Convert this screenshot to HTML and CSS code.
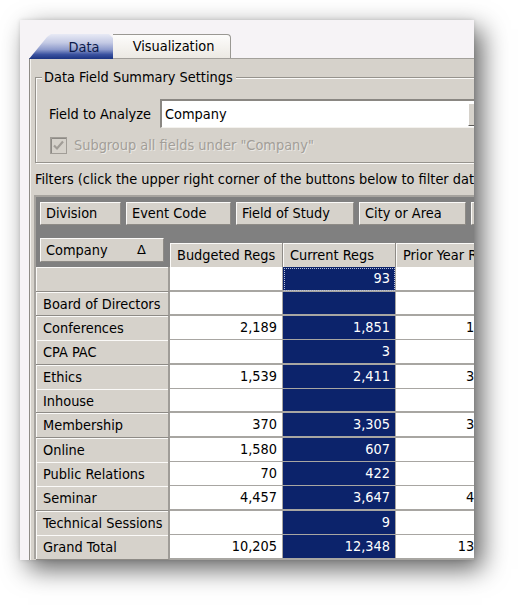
FILE: index.html
```html
<!DOCTYPE html>
<html>
<head>
<meta charset="utf-8">
<link rel="stylesheet" href="styles.css">
</head>
<body>
<div class="page">
  <div class="card">
    <div class="tabs">
      <div class="tab tab-data"><span>Data</span></div>
      <div class="tab tab-vis">Visualization</div>
    </div>
    <div class="panel">
      <fieldset class="group">
        <legend>Data Field Summary Settings</legend>
        <div class="field-row">
          <span class="field-label">Field to Analyze</span>
          <div class="combo">
            <div class="combo-text">Company</div>
            <div class="combo-btn"><span class="arrow"></span></div>
          </div>
        </div>
        <div class="check-row">
          <svg class="checkbox" width="17" height="17" viewBox="0 0 17 17">
            <rect x="0.5" y="0.5" width="16" height="16" fill="#d6d2cb" stroke="#a19d97"/>
            <path d="M1.5 16V1.5H16" fill="none" stroke="#8d8a85"/>
            <path d="M4 8.5 L7 11.5 L13 4.5" fill="none" stroke="#a19d97" stroke-width="2.2"/>
          </svg>
          <span class="disabled">Subgroup all fields under "Company"</span>
        </div>
      </fieldset>
      <div class="filters-label">Filters (click the upper right corner of the buttons below to filter data)</div>
      <div class="grid">
        <div class="filter-row">
          <div class="btn w81">Division</div>
          <div class="btn w105">Event Code</div>
          <div class="btn w118">Field of Study</div>
          <div class="btn w107">City or Area</div>
          <div class="btn w107"></div>
        </div>
        <div class="head-row">
          <div class="btn company"><span>Company</span><span class="sort">Δ</span></div>
          <div class="col-head">Budgeted Regs</div>
          <div class="col-head">Current Regs</div>
          <div class="col-head">Prior Year Regs</div>
        </div>
        <div class="row">
          <div class="rh"></div><div class="c"></div><div class="c sel focus">93</div><div class="c"></div>
        </div>
        <div class="row">
          <div class="rh">Board of Directors</div><div class="c"></div><div class="c sel"></div><div class="c"></div>
        </div>
        <div class="row">
          <div class="rh">Conferences</div><div class="c">2,189</div><div class="c sel">1,851</div><div class="c">1,964</div>
        </div>
        <div class="row">
          <div class="rh">CPA PAC</div><div class="c"></div><div class="c sel">3</div><div class="c"></div>
        </div>
        <div class="row">
          <div class="rh">Ethics</div><div class="c">1,539</div><div class="c sel">2,411</div><div class="c">3,087</div>
        </div>
        <div class="row">
          <div class="rh">Inhouse</div><div class="c"></div><div class="c sel"></div><div class="c"></div>
        </div>
        <div class="row">
          <div class="rh">Membership</div><div class="c">370</div><div class="c sel">3,305</div><div class="c">3,218</div>
        </div>
        <div class="row">
          <div class="rh">Online</div><div class="c">1,580</div><div class="c sel">607</div><div class="c"></div>
        </div>
        <div class="row">
          <div class="rh">Public Relations</div><div class="c">70</div><div class="c sel">422</div><div class="c"></div>
        </div>
        <div class="row">
          <div class="rh">Seminar</div><div class="c">4,457</div><div class="c sel">3,647</div><div class="c">4,102</div>
        </div>
        <div class="row">
          <div class="rh">Technical Sessions</div><div class="c"></div><div class="c sel">9</div><div class="c"></div>
        </div>
        <div class="row">
          <div class="rh">Grand Total</div><div class="c">10,205</div><div class="c sel">12,348</div><div class="c">13,369</div>
        </div>
      </div>
    </div>
  </div>
</div>
</body>
</html>
```

FILE: styles.css
```css
html, body {
  margin: 0;
  padding: 0;
  background: #ffffff;
}
body {
  font-family: "DejaVu Sans Condensed", "DejaVu Sans", sans-serif;
  font-size: 14.4px;
  color: #000;
}
.page {
  padding: 20px 0 0 20px;
  width: 528px;
  height: 616px;
  box-sizing: border-box;
}
.card {
  width: 454px;
  height: 540px;
  overflow: hidden;
  background: #f6f3f6;
  box-shadow: 8px 9px 24px rgba(0, 0, 0, 0.62), 0 0 4px rgba(0, 0, 0, 0.12);
}
.tabs {
  height: 38px;
  display: flex;
  align-items: flex-end;
  padding-left: 9px;
  box-sizing: border-box;
  position: relative;
  z-index: 1;
}
.tab {
  box-sizing: border-box;
  display: flex;
  align-items: center;
  justify-content: center;
  line-height: 16px;
}
.tab-data {
  width: 84px;
  height: 25px;
  padding-left: 26px;
  color: #0c1a4a;
  background: linear-gradient(#e8eaf5 0%, #c3c9e4 35%, #8e9bcc 62%, #3a52a0 82%, #1b3381 100%);
  clip-path: polygon(0 25px, 18px 3px, 22px 0, 80px 0, 84px 4px, 84px 25px);
  margin-bottom: -1px;
}
.tab-vis {
  width: 118px;
  height: 24px;
  border: 1px solid #9a9893;
  border-bottom: none;
  border-left: none;
  border-radius: 0 4px 0 0;
  background: linear-gradient(#fdfcfb, #ece9e3);
  padding-bottom: 1px;
  padding-left: 4px;
}
.panel {
  margin-left: 9px;
  height: 503px;
  background: #d6d2cb;
  border-top: 1px solid #a3a09b;
  border-left: 1px solid #8e8b86;
  box-shadow: inset 1px 0 0 #f4f2ee;
  padding-left: 5px;
  overflow: hidden;
}
.group {
  margin: 10px 0 0 0;
  padding: 0 0 8px 13px;
  width: 520px;
  border: 1px solid #96938d;
  box-shadow: inset 1px 1px 0 #fbfaf8, 1px 1px 0 #fbfaf8;
  box-sizing: border-box;
}
.group legend {
  line-height: 16px;
  padding: 0 3px 0 2px;
  margin-left: -7px;
  background: #d6d2cb;
}
.field-row {
  display: flex;
  align-items: center;
  margin-top: 14px;
  height: 29px;
}
.field-label {
  width: 111px;
  flex: none;
}
.combo {
  display: flex;
  width: 340px;
  height: 29px;
  box-sizing: border-box;
  border-top: 2px solid #8a8782;
  border-left: 2px solid #8a8782;
  border-bottom: 1px solid #f4f2ee;
  border-right: 1px solid #f4f2ee;
  background: #fff;
  flex: none;
}
.combo-text {
  width: 306px;
  padding-left: 3px;
  line-height: 26px;
  box-sizing: border-box;
  flex: none;
}
.combo-btn {
  width: 17px;
  flex: none;
  margin: 2px 0 1px 0;
  background: #d6d2cb;
  border-left: 1px solid #fff;
  border-top: 1px solid #fff;
  border-bottom: 1px solid #5c5a57;
  display: flex;
  align-items: center;
  justify-content: center;
}
.arrow {
  width: 0;
  height: 0;
  border-left: 4px solid transparent;
  border-right: 4px solid transparent;
  border-top: 4px solid #222;
}
.check-row {
  display: flex;
  align-items: center;
  margin-top: 8px;
  height: 18px;
  padding-left: 1px;
}
.checkbox {
  flex: none;
  margin-right: 7px;
}
.disabled {
  color: #a29e98;
  text-shadow: 1px 1px 0 rgba(255, 255, 255, 0.5);
  white-space: nowrap;
}
.filters-label {
  margin-top: 8px;
  line-height: 17px;
  white-space: nowrap;
}
.grid {
  margin-top: 7px;
  margin-left: -1px;
  width: 560px;
  border-top: 2px solid #a6a39e;
  border-left: 2px solid #a6a39e;
  background: #808080;
  padding-top: 5px;
}
.filter-row {
  display: flex;
  gap: 5px;
  padding-left: 4px;
  height: 23px;
}
.btn {
  box-sizing: border-box;
  height: 23px;
  background: #d6d2cb;
  border-top: 1px solid #fbfaf8;
  border-left: 1px solid #fbfaf8;
  border-right: 1px solid #8e8b86;
  border-bottom: 1px solid #8e8b86;
  padding-left: 5px;
  line-height: 21px;
  white-space: nowrap;
  flex: none;
}
.w81 { width: 81px; }
.w105 { width: 105px; }
.w118 { width: 118px; }
.w107 { width: 107px; }
.head-row {
  display: flex;
  align-items: flex-end;
  margin-top: 13px;
  height: 29px;
  padding-left: 4px;
}
.company {
  width: 124px;
  height: 24px;
  margin-bottom: 5px;
  margin-right: 6px;
  display: flex;
  justify-content: space-between;
  padding-right: 17px;
  line-height: 22px;
}
.sort {
  font-family: "DejaVu Sans", sans-serif;
  font-size: 13px;
}
.col-head {
  box-sizing: border-box;
  width: 113px;
  height: 24px;
  flex: none;
  background: #d6d2cb;
  border-right: 1px solid #8e8b86;
  box-shadow: inset 1px 1px 0 #fbfaf8;
  padding-left: 7px;
  line-height: 25px;
  white-space: nowrap;
  overflow: hidden;
}
.row {
  display: grid;
  grid-template-columns: 134px 113px 113px 113px;
  height: 24px;
}
.row:nth-child(3n) {
  height: 25px;
}
.rh {
  box-sizing: border-box;
  background: #d6d2cb;
  border-bottom: 1px solid #8e8b86;
  border-right: 2px solid #a09d98;
  box-shadow: inset 1px 1px 0 #fbfaf8;
  padding-left: 7px;
  line-height: 24px;
  white-space: nowrap;
  overflow: hidden;
}
.c {
  box-sizing: border-box;
  background: #fff;
  border-bottom: 2px solid #a8a6a2;
  border-right: 1px solid #a8a6a2;
  text-align: right;
  padding-right: 5px;
  line-height: 23px;
  white-space: nowrap;
}
.sel {
  background: #0c236b;
  color: #fff;
}
.focus {
  outline: 1px dotted #b9c2dc;
  outline-offset: -2px;
}
```
